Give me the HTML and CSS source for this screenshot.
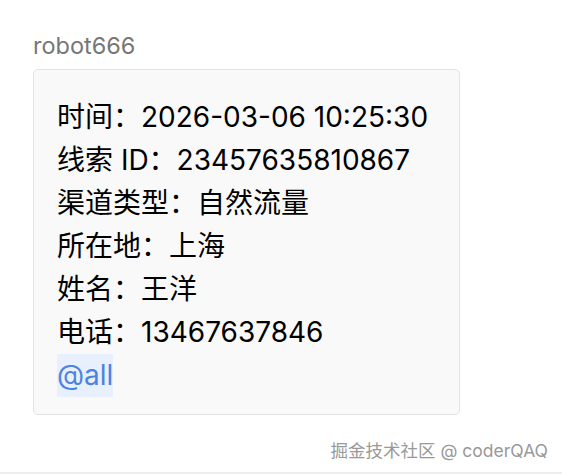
FILE: index.html
```html
<!DOCTYPE html>
<html lang="zh-CN">
  <head>
    <meta charset="utf-8">
    <title>robot666</title>
    <link rel="stylesheet" href="styles.css">
  </head>
  <body>
    <div class="page">
      <div class="sender">robot666</div>
      <div class="bubble">
        <p class="line">时间：2026-03-06 10:25:30</p>
        <p class="line">线索 ID：23457635810867</p>
        <p class="line">渠道类型：自然流量</p>
        <p class="line">所在地：上海</p>
        <p class="line">姓名：王洋</p>
        <p class="line">电话：13467637846</p>
        <p class="line"><span class="mention">@all</span></p>
      </div>
      <div class="watermark">掘金技术社区 @ coderQAQ</div>
    </div>
    <div class="bottom-bar"></div>
  </body>
</html>
```

FILE: styles.css
```css
html, body{
  margin:0;
  padding:0;
  background:#fff;
}
body{
  font-family:Inter, "Noto Sans CJK SC", sans-serif;
  width:562px;
  height:474px;
  overflow:hidden;
  display:flex;
  flex-direction:column;
}
.page{
  flex:1;
  padding:32px 0 0 33px;
}
/*sender name*/
.sender{
  font-size:23.5px;
  line-height:28px;
  color:#777;
  height:37px;
}
/*message bubble*/
.bubble{
  width:402px;
  height:301px;
  border:1px solid #e3e3e3;
  border-radius:5px;
  background:#f9f9f9;
  padding:26px 0 17px 23px;
}
.line{
  margin:0;
  font-size:28px;
  line-height:43px;
  color:#000;
  white-space:nowrap;
}
.mention{
  display:inline-block;
  background:#e8f0fd;
  color:#4b84e0;
  line-height:43px;
}
.watermark{
  text-align:right;
  padding-right:14px;
  margin-top:24px;
  font-size:17.5px;
  line-height:24px;
  color:#999;
}
.bottom-bar{
  height:2px;
  background:#eeeeee;
}
```
